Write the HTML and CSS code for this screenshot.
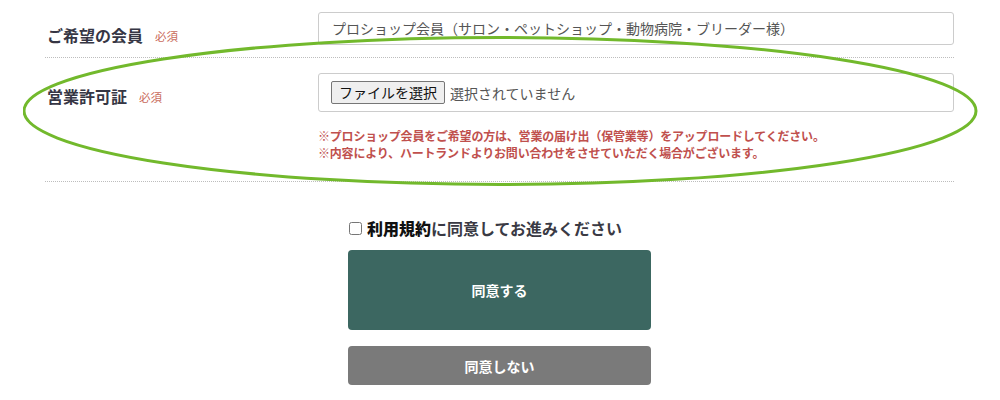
FILE: index.html
```html
<!DOCTYPE html>
<html lang="ja">
<head>
  <meta charset="UTF-8" />
  <title>会員登録</title>
  <link rel="stylesheet" href="styles.css">
</head>
<body>
<div class="form">
  <div class="row">
    <div class="label">ご希望の会員<span class="req">必須</span></div>
    <div class="field">
      <div class="input">プロショップ会員（サロン・ペットショップ・動物病院・ブリーダー様）</div>
    </div>
  </div>

  <div class="row">
    <div class="label">営業許可証<span class="req">必須</span></div>
    <div class="field">
      <div class="file">
        <span class="file-btn">ファイルを選択</span>
        <span class="file-name">選択されていません</span>
      </div>
      <p class="note">※プロショップ会員をご希望の方は、営業の届け出（保管業等）をアップロードしてください。<br>※内容により、ハートランドよりお問い合わせをさせていただく場合がございます。</p>
    </div>
  </div>

  <svg class="circle" width="980" height="170" viewBox="0 0 980 170">
    <ellipse cx="477" cy="76" rx="476" ry="73.5" fill="none" stroke="#72b92c" stroke-width="3" />
  </svg>
</div>

<div class="agree">
  <label class="check"><input type="checkbox"><span><b class="terms">利用規約</b>に同意してお進みください</span></label>
  <button class="btn btn-ok">同意する</button>
  <button class="btn btn-ng">同意しない</button>
</div>
</body>
</html>
```

FILE: styles.css
```css
* {
  box-sizing: border-box;
}
body {
  margin: 0;
  font-family: "Noto Sans CJK JP", "Noto Sans", sans-serif;
  color: #3a3a44;
  background: #fff;
}

.form {
  position: relative;
  width: 909px;
  margin: 0 0 0 45px;
}

.row {
  display: grid;
  grid-template-columns: 273px 1fr;
  align-items: start;
  border-bottom: 1px dotted #bdbdbd;
  padding: 12px 0 11px;
}
.row + .row {
  padding: 15px 0 20px;
}

.label {
  margin-top: 13px;
  padding-left: 2px;
  font-size: 16px;
  line-height: 20px;
  font-weight: 700;
  color: #363644;
}
.req {
  margin-left: 12px;
  font-size: 11.5px;
  font-weight: 400;
  color: #c96a5c;
  vertical-align: 1px;
}

.input {
  height: 33px;
  border: 1px solid #cccccc;
  border-radius: 3px;
  padding: 0 13px;
  font-size: 14px;
  line-height: 31px;
  color: #555;
}

.file {
  display: flex;
  align-items: center;
  height: 39px;
  border: 1px solid #cccccc;
  border-radius: 3px;
  padding: 0 12px;
}
.file-btn {
  height: 23px;
  padding: 0 7px;
  background: #efefef;
  border: 1px solid #767676;
  border-radius: 2px;
  font-size: 14px;
  line-height: 21px;
  color: #111;
}
.file-name {
  margin-left: 5px;
  font-size: 14px;
  color: #555;
}

.note {
  margin: 15px 0 0;
  font-size: 12px;
  line-height: 17px;
  font-weight: 700;
  color: #c0504d;
  letter-spacing: -0.2px;
}

.circle {
  position: absolute;
  left: -22px;
  top: 35px;
  pointer-events: none;
}

.agree {
  width: 303px;
  margin: 34px 0 0 348px;
  display: flex;
  flex-direction: column;
}
.check {
  display: flex;
  align-items: center;
  height: 24px;
  font-size: 16px;
  font-weight: 700;
  color: #3a3a44;
}
.check input {
  width: 13px;
  height: 13px;
  margin: 0 5px 0 1px;
}
.terms {
  color: #111;
}

.btn {
  border: none;
  border-radius: 4px;
  color: #fff;
  font-family: inherit;
  font-size: 14px;
  font-weight: 700;
  cursor: pointer;
}
.btn-ok {
  height: 80px;
  margin-top: 10px;
  background: #3c6761;
}
.btn-ng {
  height: 39px;
  margin-top: 16px;
  background: #7a7a7a;
}
```
